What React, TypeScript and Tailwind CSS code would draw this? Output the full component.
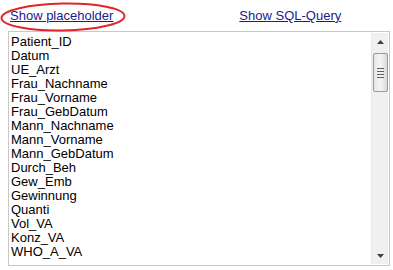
import React from 'react';

const fields = [
  'Patient_ID',
  'Datum',
  'UE_Arzt',
  'Frau_Nachname',
  'Frau_Vorname',
  'Frau_GebDatum',
  'Mann_Nachname',
  'Mann_Vorname',
  'Mann_GebDatum',
  'Durch_Beh',
  'Gew_Emb',
  'Gewinnung',
  'Quanti',
  'Vol_VA',
  'Konz_VA',
  'WHO_A_VA',
];

const App: React.FC = () => {
  return (
    <div className="relative w-[393px] h-[270px] bg-white font-['Liberation_Sans',Arial,sans-serif] text-[13px] text-black overflow-hidden">
      <div className="flex items-center h-[31px] pl-[10px]">
        <a href="#" className="text-[#1b1a8f] underline">Show placeholder</a>
        <a href="#" className="ml-[126px] text-[#1b1a8f] underline">Show SQL-Query</a>
      </div>

      {/* red marker circle drawn over the first link */}
      <svg className="absolute left-0 top-[2px] pointer-events-none" width="127" height="30" viewBox="0 0 127 30">
        <ellipse cx="63" cy="15" rx="61.5" ry="13.5" fill="none" stroke="#e0262a" strokeWidth="2" transform="rotate(-1 63 15)" />
      </svg>

      <div className="ml-[8px] w-[382px] h-[235px] border border-[#c8c8c8] flex">
        <div className="flex-1 pl-[2px] pt-[3px] leading-[14px]">
          {fields.map((f) => (
            <div key={f}>{f}</div>
          ))}
        </div>
        <div className="w-[17px] my-px mr-px bg-[#f0f0f0] flex flex-col items-center border-l border-[#e8e8e8]">
          <div className="h-[17px] flex items-center justify-center">
            <svg width="7" height="4" viewBox="0 0 7 4"><path d="M3.5 0 L7 4 L0 4 Z" fill="#404040" /></svg>
          </div>
          <div className="mt-[3px] w-[15px] h-[39px] rounded-[2px] border border-[#9a9a9a] bg-gradient-to-r from-[#e8e8e8] via-[#f4f4f4] to-[#d8d8d8] flex flex-col items-center justify-center gap-[2px]">
            <div className="w-[7px] h-px bg-[#606060]" />
            <div className="w-[7px] h-px bg-[#606060]" />
            <div className="w-[7px] h-px bg-[#606060]" />
            <div className="w-[7px] h-px bg-[#606060]" />
          </div>
          <div className="flex-1" />
          <div className="h-[17px] flex items-center justify-center">
            <svg width="7" height="4" viewBox="0 0 7 4"><path d="M0 0 L7 0 L3.5 4 Z" fill="#404040" /></svg>
          </div>
        </div>
      </div>
    </div>
  );
};

export default App;
